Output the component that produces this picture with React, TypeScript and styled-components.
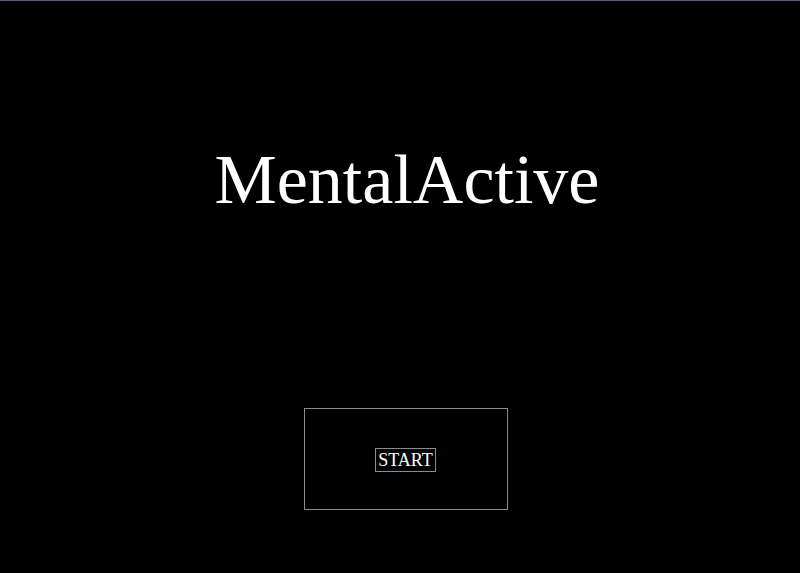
import React from "react";
import styled, { createGlobalStyle } from "styled-components";

const Global = createGlobalStyle`
  html, body { margin: 0; padding: 0; background: #000; }
  body { font-family: "Liberation Serif", "Times New Roman", serif; }
`;

const Page = styled.div`
  width: 800px;
  height: 573px;
  box-sizing: border-box;
  background: #000;
  border-top: 1px solid #5a5a88;
  display: flex;
  flex-direction: column;
  align-items: center;
  padding-left: 11px;
`;

const Title = styled.h1`
  margin: 140px 0 0 3px;
  font-family: "Liberation Serif", "Times New Roman", serif;
  font-weight: normal;
  font-size: 70px;
  line-height: 77px;
  color: #fff;
`;

const StartPanel = styled.div`
  margin-top: 190px;
  width: 204px;
  height: 102px;
  box-sizing: border-box;
  border: 1px solid #8a8a90;
  display: flex;
  align-items: center;
  justify-content: center;
`;

const StartButton = styled.button`
  margin-top: 2px;
  background: transparent;
  color: #fff;
  border: 1px solid #8a8a90;
  font-family: "Liberation Serif", "Times New Roman", serif;
  font-size: 18px;
  line-height: 20px;
  padding: 1px 2px;
  cursor: pointer;
`;

export default function App() {
  return (
    <>
      <Global />
      <Page>
        <Title>MentalActive</Title>
        <StartPanel>
          <StartButton>START</StartButton>
        </StartPanel>
      </Page>
    </>
  );
}
